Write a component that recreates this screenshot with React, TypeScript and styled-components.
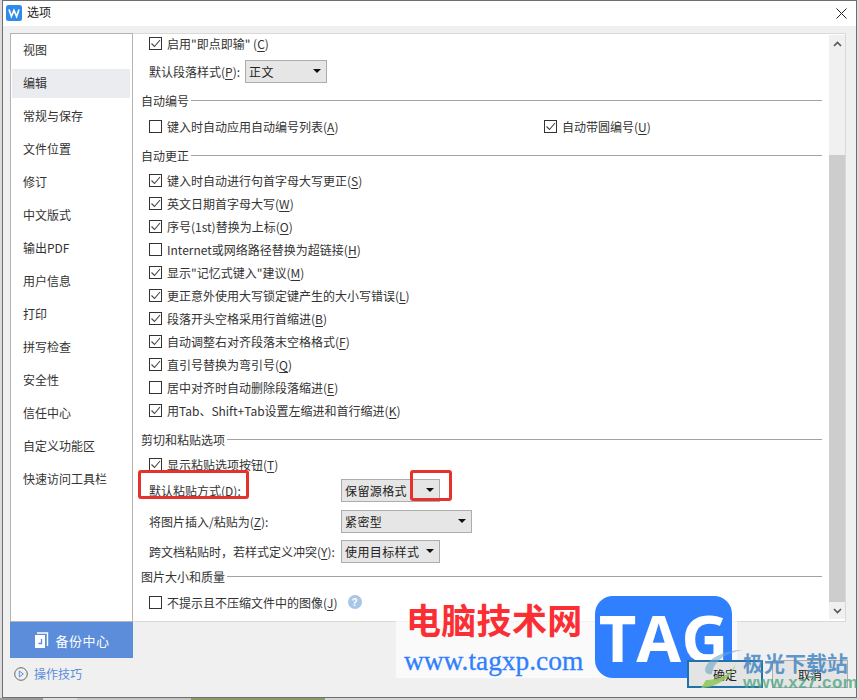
import React from 'react';
import styled, { createGlobalStyle } from 'styled-components';

const GlobalStyle = createGlobalStyle`
    html, body {
        margin: 0;
        padding: 0;
        background: #dcdcdc;
    }
    body {
        width: 859px;
        height: 700px;
        overflow: hidden;
        font-family: "Noto Sans CJK SC", "Liberation Sans", sans-serif;
    }
`
const Page = styled.div`
    position: relative;
    width: 859px;
    height: 700px;
    padding: 0 2px 2px 2px;
    box-sizing: border-box;
`
const DesktopStrip = styled.div`
    position: absolute;
    left: 0;
    right: 0;
    bottom: 0;
    height: 2px;
    background: linear-gradient(to right, #9a9a9a 0 43px, #dedede 43px 77px, #c4c4c4 77px 191px, #8a9c6a 191px 325px, #d5d5d5 325px);
`
const Dialog = styled.div`
    position: relative;
    width: 100%;
    height: 100%;
    box-sizing: border-box;
    background: #f0f0f0;
    border: 1px solid #6e6e6e;
    display: flex;
    flex-direction: column;
`
const TitleBar = styled.div`
    height: 25px;
    flex: none;
    background: #fff;
    display: flex;
    align-items: center;
    padding: 0 9px 1px 3px;
    box-sizing: border-box;
`
const TitleText = styled.span`
    font-size: 12px;
    line-height: 16px;
    color: #222;
    margin: -2px 0 0 5px;
    flex: 1;
`
const Main = styled.div`
    flex: 1;
    display: flex;
    padding: 7px 10px 0 7px;
    align-items: flex-start;
`
const SideColumn = styled.div`
    width: 123px;
    flex: none;
    display: flex;
    flex-direction: column;
`
const SideList = styled.div`
    height: 589px;
    box-sizing: border-box;
    background: #fff;
    border: 1px solid #b4b4b4;
    padding: 2px 2px 0 1px;
`
const SideItem = styled.div<{ $active?: boolean }>`
    height: 29px;
    line-height: 28px;
    margin-bottom: 4px;
    padding-left: 11px;
    font-size: 12px;
    color: #333;
    background: ${p => (p.$active ? '#eaecef' : 'transparent')};
`
const BackupButton = styled.div`
    height: 36px;
    background: #5b8ddb;
    color: #fff;
    font-size: 13px;
    letter-spacing: 0.5px;
    display: flex;
    align-items: center;
    justify-content: center;
    gap: 6px;
`
const TipsLink = styled.div`
    display: flex;
    align-items: center;
    gap: 6px;
    margin: 7px 0 0 4px;
    font-size: 12px;
    color: #5b8ddb;
`
const Content = styled.div`
    flex: 1;
    height: 589px;
    box-sizing: border-box;
    background: #fff;
    border: 1px solid #d9d9d9;
    border-left: none;
    display: flex;
`
const Scroll = styled.div`
    flex: 1;
    min-width: 0;
    padding: 0 7px 0 8px;
    font-size: 12px;
    color: #333;
`
const Row = styled.div<{ $h?: number }>`
    height: ${p => p.$h ?? 23}px;
    display: flex;
    align-items: center;
    padding-left: 8px;
    white-space: nowrap;
`
const Section = styled.div<{ $h?: number }>`
    height: ${p => p.$h ?? 23}px;
    display: flex;
    align-items: center;
    gap: 2px;
    color: #333;
    &::after {
        content: '';
        flex: 1;
        height: 1px;
        background: #a3a3a3;
    }
`
const Box = styled.span`
    width: 13px;
    height: 13px;
    flex: none;
    box-sizing: border-box;
    border: 1px solid #333;
    background: #fff;
    margin-right: 5px;
    display: inline-flex;
    align-items: center;
    justify-content: center;
`
const Mnemonic = styled.span`
    text-decoration: underline;
    text-underline-offset: 2px;
`
const Cell = styled.div<{ $w: number }>`
    width: ${p => p.$w}px;
    flex: none;
    display: flex;
    align-items: center;
`
const Select = styled.div<{ $w: number; $gap?: number }>`
    width: ${p => p.$w}px;
    height: 23px;
    box-sizing: border-box;
    flex: none;
    margin-left: ${p => p.$gap ?? 0}px;
    background: #e6e6e6;
    border: 1px solid #acacac;
    display: flex;
    align-items: center;
    justify-content: space-between;
    padding: 0 5px 0 3px;
    color: #222;
    font-size: 12px;
    letter-spacing: 0.4px;
`
const Caret = styled.span`
    width: 0;
    height: 0;
    border-left: 4px solid transparent;
    border-right: 4px solid transparent;
    border-top: 4px solid #111;
`
const Help = styled.span`
    width: 14px;
    height: 14px;
    border-radius: 50%;
    background: #a9c6e6;
    color: #fff;
    font: bold 10px "Liberation Sans", sans-serif;
    display: inline-flex;
    align-items: center;
    justify-content: center;
    margin-left: 10px;
`
const ScrollBar = styled.div`
    width: 16px;
    flex: none;
    margin: 1px 0 2px 0;
    background: #f0f0f0;
    display: flex;
    flex-direction: column;
    align-items: center;
`
const ScrollArrow = styled.div`
    height: 17px;
    flex: none;
    display: flex;
    align-items: center;
    justify-content: center;
`
const ScrollThumb = styled.div`
    width: 100%;
    flex: 1;
    background: #cdcdcd;
    margin-top: 103px;
`
const Footer = styled.div`
    position: absolute;
    top: 660px;
    right: 11px;
    display: flex;
    gap: 9px;
`
const Button = styled.div<{ $primary?: boolean }>`
    width: 76px;
    height: 28px;
    box-sizing: border-box;
    background: #e4e4e4;
    border: ${p => (p.$primary ? '2px solid #2272a8' : '1px solid #adadad')};
    color: #222;
    font-size: 12px;
    display: flex;
    align-items: center;
    justify-content: center;
`
const Annotation = styled.div<{ $x: number; $y: number; $w: number; $h: number }>`
    position: absolute;
    left: ${p => p.$x}px;
    top: ${p => p.$y}px;
    width: ${p => p.$w}px;
    height: ${p => p.$h}px;
    box-sizing: border-box;
    border: 3px solid #e5322d;
    border-radius: 3px;
`
const WatermarkPanel = styled.div`
    position: absolute;
    left: 396px;
    top: 620px;
    width: 341px;
    height: 58px;
    background: rgba(255, 255, 255, 0.65);
`
const WatermarkTitle = styled.div`
    position: absolute;
    left: 406px;
    top: 594px;
    font: 700 35px/50px "Noto Sans CJK SC", sans-serif;
    letter-spacing: 0.3px;
    color: #fb2e33;
    white-space: nowrap;
`
const WatermarkUrl = styled.div`
    position: absolute;
    left: 404px;
    top: 645px;
    font: normal 27.4px/32px "Liberation Serif", serif;
    -webkit-text-stroke: 0.3px #2f7fff;
    color: #2f7fff;
    white-space: nowrap;
`
const TagBadge = styled.div`
    position: absolute;
    left: 595px;
    top: 596px;
    width: 137px;
    height: 82px;
    border-radius: 18px;
    background: #2f7fff;
    color: #fff;
    font: bold 65px/82px "Open Sans", sans-serif;
    display: flex;
    align-items: center;
    justify-content: center;
`
const CornerTitle = styled.div`
    position: absolute;
    left: 743px;
    top: 648px;
    font: bold 21px/28px "Noto Sans CJK SC", sans-serif;
    color: rgba(70, 135, 195, 0.85);
    white-space: nowrap;
`
const CornerUrl = styled.div`
    position: absolute;
    left: 743px;
    top: 673px;
    font: bold 17px/20px "Liberation Sans", sans-serif;
    color: rgba(75, 165, 130, 0.8);
    letter-spacing: 0.4px;
    white-space: nowrap;
`
const CornerSwoosh = styled.svg`
    position: absolute;
    left: 700px;
    top: 648px;
`

const sideItems = ['视图', '编辑', '常规与保存', '文件位置', '修订', '中文版式', '输出PDF', '用户信息', '打印', '拼写检查', '安全性', '信任中心', '自定义功能区', '快速访问工具栏'];

const correctItems: [string, boolean][] = [
    ['键入时自动进行句首字母大写更正(S)', true],
    ['英文日期首字母大写(W)', true],
    ['序号(1st)替换为上标(O)', true],
    ['Internet或网络路径替换为超链接(H)', false],
    ['显示"记忆式键入"建议(M)', true],
    ['更正意外使用大写锁定键产生的大小写错误(L)', true],
    ['段落开头空格采用行首缩进(B)', true],
    ['自动调整右对齐段落末空格格式(F)', true],
    ['直引号替换为弯引号(Q)', true],
    ['居中对齐时自动删除段落缩进(E)', false],
    ['用Tab、Shift+Tab设置左缩进和首行缩进(K)', true],
];

// underlines the access key in labels like "打印(P)"
const Label: React.FC<{ text: string }> = ({ text }) => {
    const parts = text.split(/\(([A-Z])\)/);
    return (
        <span>
            {parts[0]}
            {parts.length > 1 && <>(<Mnemonic>{parts[1]}</Mnemonic>){parts[2]}</>}
        </span>
    );
};

const Check: React.FC<{ checked?: boolean }> = ({ checked }) => (
    <Box>
        {checked && (
            <svg width="11" height="11" viewBox="0 0 11 11">
                <path d="M1.5 5.5l3 3 5.5-6.5" fill="none" stroke="#444" strokeWidth="1.1" />
            </svg>
        )}
    </Box>
);

const AppLogo = () => (
    <svg width="16" height="16" viewBox="0 0 16 16">
        <rect width="16" height="16" rx="2.5" fill="#2f8bea" />
        <path d="M3 4.5l2.4 7 2.6-6 2.6 6 2.4-7" fill="none" stroke="#fff" strokeWidth="1.7" />
    </svg>
);

const App: React.FC = () => {
    return (
        <Page>
            <GlobalStyle />
            <DesktopStrip />
            <Dialog>
                <TitleBar>
                    <AppLogo />
                    <TitleText>选项</TitleText>
                    <svg width="11" height="11" viewBox="0 0 11 11">
                        <path d="M.5.5l10 10M10.5.5l-10 10" stroke="#222" strokeWidth="1" />
                    </svg>
                </TitleBar>
                <Main>
                    <SideColumn>
                        <SideList>
                            {sideItems.map(item => (
                                <SideItem key={item} $active={item === '编辑'}>{item}</SideItem>
                            ))}
                        </SideList>
                        <BackupButton>
                            <svg width="16" height="17" viewBox="0 0 16 17">
                                <path d="M2 3h10v13H2z" fill="#fff" />
                                <path d="M4 1h10.5v13" fill="none" stroke="#fff" strokeWidth="1.4" />
                                <path d="M8.5 7v4.5H5.5" fill="none" stroke="#5b8ddb" strokeWidth="1.3" />
                            </svg>
                            备份中心
                        </BackupButton>
                        <TipsLink>
                            <svg width="14" height="14" viewBox="0 0 14 14">
                                <circle cx="7" cy="7" r="6.3" fill="none" stroke="#666" />
                                <path d="M5.3 4l4 3-4 3z" fill="none" stroke="#5b8ddb" />
                            </svg>
                            操作技巧
                        </TipsLink>
                    </SideColumn>
                    <Content>
                        <Scroll>
                            <Row $h={19}><Check checked /><Label text={'启用"即点即输" (C)'} /></Row>
                            <Row $h={36}><Label text="默认段落样式(P):" /><Select $w={82} $gap={5}>正文<Caret /></Select></Row>
                            <Section>自动编号</Section>
                            <Row $h={29}>
                                <Cell $w={395}><Check /><Label text="键入时自动应用自动编号列表(A)" /></Cell>
                                <Check checked /><Label text="自动带圆编号(U)" />
                            </Row>
                            <Section $h={28}>自动更正</Section>
                            {correctItems.map(([label, checked]) => (
                                <Row key={label}><Check checked={checked} /><Label text={label} /></Row>
                            ))}
                            <Section $h={35}>剪切和粘贴选项</Section>
                            <Row $h={15}><Check checked /><Label text="显示粘贴选项按钮(T)" /></Row>
                            <Row $h={36}><Cell $w={192}><Label text="默认粘贴方式(D):" /></Cell><Select $w={99}>保留源格式<Caret /></Select></Row>
                            <Row $h={26}><Cell $w={192}><Label text="将图片插入/粘贴为(Z):" /></Cell><Select $w={131}>紧密型<Caret /></Select></Row>
                            <Row $h={34}><Cell $w={192}><Label text="跨文档粘贴时，若样式定义冲突(Y):" /></Cell><Select $w={99}>使用目标样式<Caret /></Select></Row>
                            <Section $h={17}>图片大小和质量</Section>
                            <Row $h={34}><Check /><Label text="不提示且不压缩文件中的图像(J)" /><Help>?</Help></Row>
                        </Scroll>
                        <ScrollBar>
                            <ScrollArrow>
                                <svg width="9" height="6" viewBox="0 0 9 6"><path d="M1 5l3.5-3.5L8 5" fill="none" stroke="#555" strokeWidth="1.6" /></svg>
                            </ScrollArrow>
                            <ScrollThumb />
                            <ScrollArrow>
                                <svg width="9" height="6" viewBox="0 0 9 6"><path d="M1 1l3.5 3.5L8 1" fill="none" stroke="#555" strokeWidth="1.6" /></svg>
                            </ScrollArrow>
                        </ScrollBar>
                    </Content>
                </Main>
            </Dialog>
            <Annotation $x={138} $y={470} $w={111} $h={29} />
            <Annotation $x={410} $y={470} $w={42} $h={31} />
            <WatermarkPanel />
            <WatermarkTitle>电脑技术网</WatermarkTitle>
            <WatermarkUrl>www.tagxp.com</WatermarkUrl>
            <TagBadge>TAG</TagBadge>
            <Footer>
                <Button $primary>确定</Button>
                <Button>取消</Button>
            </Footer>
            <CornerSwoosh width="46" height="42" viewBox="0 0 46 42">
                <path d="M1 40C14 40 34 30 36 14C34 26 18 32 6 32z" fill="#8fc75a" opacity="0.85" />
                <path d="M5 22C6 12 22 2 43 2C26 5 14 12 12 26C8 27 5 25 5 22z" fill="#6aa5c8" opacity="0.6" />
            </CornerSwoosh>
            <CornerTitle>极光下载站</CornerTitle>
            <CornerUrl>www.xz7.com</CornerUrl>
        </Page>
    );
};

export default App;
